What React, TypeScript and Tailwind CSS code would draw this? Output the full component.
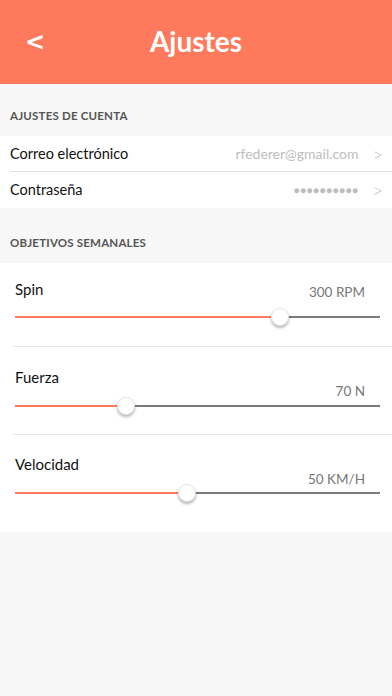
import React from "react";

const font = { fontFamily: "Lato, 'Noto Sans', sans-serif" };

type Goal = {
  label: string;
  value: string;
  pct: number;
  block: string;
  valueCls: string;
  sliderCls: string;
};

const goals: Goal[] = [
  { label: "Spin", value: "300 RPM", pct: 72.6, block: "pt-[16px] pb-[20px]", valueCls: "-mt-[17px]", sliderCls: "mt-[6px]" },
  { label: "Fuerza", value: "70 N", pct: 30.4, block: "pt-[20px] pb-[19px]", valueCls: "-mt-[6px]", sliderCls: "-mt-[4px]" },
  { label: "Velocidad", value: "50 KM/H", pct: 47.1, block: "pt-[19px] pb-[30px]", valueCls: "-mt-[5px]", sliderCls: "-mt-[5px]" },
];

function Slider({ pct }: { pct: number }) {
  return (
    <div className="relative h-[18px] ml-[15px] mr-[12px]">
      <div className="absolute left-0 right-0 top-[8px] h-[2px] bg-[#7a7a7a]" />
      <div className="absolute left-0 top-[8px] h-[2px] bg-[#ff7a5c]" style={{ width: `${pct}%` }} />
      <div
        className="absolute top-0 w-[18px] h-[18px] -ml-[9px] rounded-full bg-white shadow-[0_2px_3px_rgba(0,0,0,0.3)] border border-[#e6e6e6]"
        style={{ left: `${pct}%` }}
      />
    </div>
  );
}

function Chevron() {
  return <span className="text-[18px] font-light leading-none text-[#bdbdbd]">&gt;</span>;
}

export default function App() {
  return (
    <div className="w-[392px] h-[696px] bg-[#f7f7f7] overflow-hidden" style={font}>
      {/* Header */}
      <div className="relative h-[84px] bg-[#ff7a5c] flex items-center justify-center">
        <span
          className="absolute left-[25px] top-[27px] text-white text-[24px] font-bold leading-[30px]"
          style={{ fontFamily: "'DejaVu Sans', sans-serif" }}
        >
          &lt;
        </span>
        <span className="text-white text-[28px] font-bold leading-none -mt-[2px]">Ajustes</span>
      </div>

      {/* Account */}
      <div className="h-[52px] pl-[10px] flex items-end pb-[13px]">
        <span className="text-[11.5px] font-bold text-[#555] tracking-[0.2px] leading-[14px]">AJUSTES DE CUENTA</span>
      </div>
      <div className="bg-white">
        <div className="h-[35px] pl-[10px] pr-[9px] flex items-center justify-between">
          <span className="text-[14.5px] text-[#111]">Correo electrónico</span>
          <span className="text-[14px] text-[#bdbdbd] flex items-center gap-[14px]">
            rfederer@gmail.com
            <Chevron />
          </span>
        </div>
        <div className="ml-[10px] border-t border-[#e2e2e2]" />
        <div className="h-[36px] pl-[10px] pr-[9px] flex items-center justify-between">
          <span className="text-[14.5px] text-[#111]">Contraseña</span>
          <span className="text-[#bdbdbd] flex items-center gap-[14px]">
            <span className="text-[10px] tracking-[0.5px]">●●●●●●●●●●</span>
            <Chevron />
          </span>
        </div>
      </div>

      {/* Goals */}
      <div className="h-[55px] pl-[10px] flex items-end pb-[13px]">
        <span className="text-[11.5px] font-bold text-[#555] tracking-[0.2px] leading-[14px]">OBJETIVOS SEMANALES</span>
      </div>
      <div className="bg-white">
        {goals.map((g, i) => (
          <div key={g.label}>
            {i > 0 && <div className="ml-[13px] border-t border-[#e4e4e4]" />}
            <div className={g.block}>
              <div className="h-[20px] leading-[20px] pl-[15px] text-[15px] text-[#111]">{g.label}</div>
              <div className={`h-[20px] leading-[20px] pr-[27px] text-right text-[13.5px] text-[#777] ${g.valueCls}`}>{g.value}</div>
              <div className={g.sliderCls}>
                <Slider pct={g.pct} />
              </div>
            </div>
          </div>
        ))}
      </div>
    </div>
  );
}
